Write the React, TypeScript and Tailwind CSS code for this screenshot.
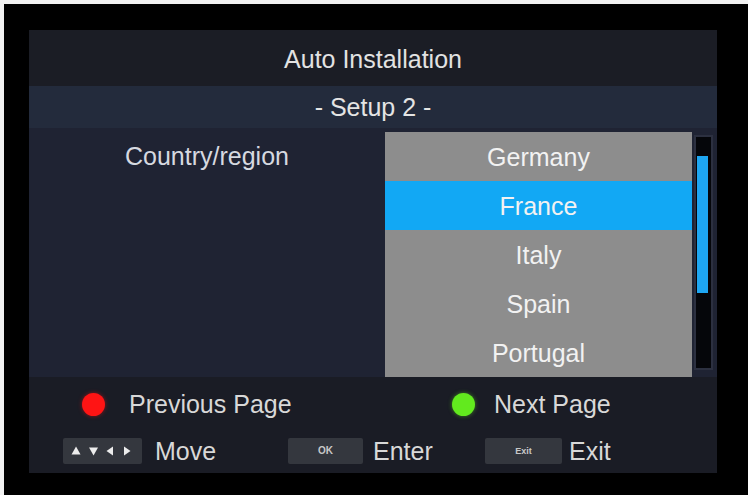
import React from "react";

const font = { fontFamily: '"Liberation Sans", Arial, sans-serif' };

function Arrows() {
  return (
    <svg width="79" height="26" viewBox="0 0 79 26">
      <polygon points="13,8.5 17.5,16.5 8.5,16.5" fill="#ececec" />
      <polygon points="26,9.5 35,9.5 30.5,17.5" fill="#ececec" />
      <polygon points="50,8.5 50,17.5 43.5,13" fill="#ececec" />
      <polygon points="61,8.5 61,17.5 67.5,13" fill="#ececec" />
    </svg>
  );
}

export default function App() {
  const items = ["Germany", "France", "Italy", "Spain", "Portugal"];
  return (
    <div className="w-[748px] h-[495px] bg-[#f2f2f2] pt-[4px] pl-[4px] overflow-hidden" style={font}>
      <div className="w-[744px] h-[491px] bg-black pt-[26px] pl-[25px]">
        <div className="w-[688px] h-[443px] flex flex-col text-[25px] leading-none">
          {/* Title */}
          <div className="h-[56px] bg-[#1b1d25] flex items-center justify-center text-[#e2e2e2] pt-[3px]">
            Auto Installation
          </div>
          {/* Subtitle */}
          <div className="h-[42px] bg-[#232b3c] flex items-center justify-center text-[#e4e4e4]">
            - Setup 2 -
          </div>
          {/* Body */}
          <div className="h-[249px] bg-[#1f2333] flex">
            <div className="w-[356px] pt-[4px]">
              <div className="h-[49px] flex items-center justify-center text-[#d6d9e0]">Country/region</div>
            </div>
            <div className="w-[307px] mt-[4px] bg-[#8d8d8d] flex flex-col">
              {items.map((it, i) => (
                <div
                  key={it}
                  className={
                    "h-[49px] flex items-center justify-center text-[#f2f2f2] pt-[2px] " +
                    (i === 1 ? "bg-[#12a8f4]" : "")
                  }
                >
                  {it}
                </div>
              ))}
            </div>
            <div className="ml-[2px] mt-[7px] w-[19px] h-[235px] border-[2px] border-[#2c3040] bg-[#05060a] p-px pt-[19px]">
              <div className="w-[11px] h-[137px] bg-[#1ea6f2]" />
            </div>
          </div>
          {/* Footer */}
          <div className="flex-1 bg-[#1a1c25] pt-[13px] text-[#d8d8d8]">
            <div className="h-[28px] flex items-center pl-[53px]">
              <div className="w-[370px] flex items-center">
                <div className="w-[23px] h-[23px] rounded-full bg-[#ff1414] shadow-[0_0_4px_rgba(255,20,20,0.5)]" />
                <span className="ml-[24px]">Previous Page</span>
              </div>
              <div className="flex items-center">
                <div className="w-[23px] h-[23px] rounded-full bg-[#62ea1e] shadow-[0_0_4px_rgba(98,234,30,0.5)]" />
                <span className="ml-[19px]">Next Page</span>
              </div>
            </div>
            <div className="mt-[19px] h-[28px] flex items-center pl-[34px]">
              <div className="w-[225px] flex items-center">
                <div className="w-[79px] h-[26px] bg-[#34373e] rounded-[2px]">
                  <Arrows />
                </div>
                <span className="ml-[13px]">Move</span>
              </div>
              <div className="w-[197px] flex items-center">
                <div className="w-[75px] h-[26px] bg-[#34373e] rounded-[2px] flex items-center justify-center text-[10px] font-bold text-[#c8c8c8]">
                  OK
                </div>
                <span className="ml-[10px]">Enter</span>
              </div>
              <div className="flex items-center">
                <div className="w-[77px] h-[26px] bg-[#34373e] rounded-[2px] flex items-center justify-center text-[9px] font-bold text-[#c8c8c8]">
                  Exit
                </div>
                <span className="ml-[7px]">Exit</span>
              </div>
            </div>
          </div>
        </div>
      </div>
    </div>
  );
}
